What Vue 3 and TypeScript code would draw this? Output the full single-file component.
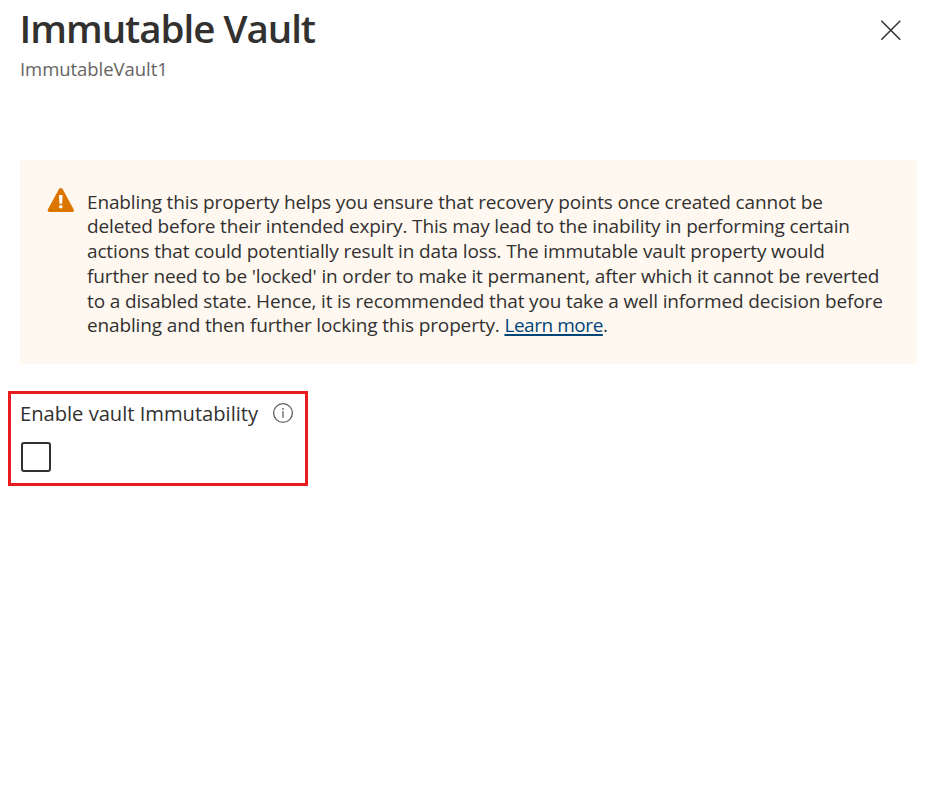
<script setup lang="ts">
import { ref } from 'vue'

const vaultName = 'ImmutableVault1'
const immutable = ref(false)

const lines: string[] = [
  'Enabling this property helps you ensure that recovery points once created cannot be',
  'deleted before their intended expiry. This may lead to the inability in performing certain',
  'actions that could potentially result in data loss. The immutable vault property would',
  "further need to be 'locked' in order to make it permanent, after which it cannot be reverted",
  'to a disabled state. Hence, it is recommended that you take a well informed decision before',
]
</script>

<template>
  <main class="panel">
    <header class="header">
      <div>
        <h1 class="title">Immutable Vault</h1>
        <p class="subtitle">{{ vaultName }}</p>
      </div>
      <button class="close" type="button" aria-label="Close">
        <svg width="22" height="22" viewBox="0 0 22 22" fill="none" stroke="#323130" stroke-width="1.5">
          <path d="M1.3 1.8 20.3 20.8M20.3 1.8 1.3 20.8" />
        </svg>
      </button>
    </header>

    <section class="notice">
      <svg class="warning" width="28" height="26" viewBox="0 0 28 26">
        <path d="M11.7 1.4Q13.8-1.2 15.9 1.4L26.6 21.2Q27.8 24 25 24H2.6Q-.2 24 1 21.2Z" fill="#db7500" />
        <path d="M12 7h3.6l-.4 8.8h-2.8z" fill="#fff" />
        <circle cx="13.8" cy="18.8" r="1.8" fill="#fff" />
      </svg>
      <p class="message">
        <span v-for="line in lines" :key="line" class="line">{{ line }}</span>
        <span class="line">enabling and then further locking this property. <a class="link" href="#">Learn more</a>.</span>
      </p>
    </section>

    <section class="setting">
      <div class="label-row">
        <label class="label" for="immutability">Enable vault Immutability</label>
        <svg class="info" width="22" height="22" viewBox="0 0 22 22">
          <circle cx="11" cy="11" r="9.4" fill="none" stroke="#605e5c" stroke-width="1.3" />
          <path d="M11 9.3v6.4" stroke="#605e5c" stroke-width="1.3" />
          <circle cx="11" cy="6.9" r=".9" fill="#605e5c" />
        </svg>
      </div>
      <input id="immutability" v-model="immutable" class="checkbox" type="checkbox" />
    </section>
  </main>
</template>

<style>
body {
  background: #fff;
}
</style>

<style scoped>
.panel {
  box-sizing: border-box;
  width: 944px;
  height: 792px;
  overflow: hidden;
  font-family: 'Open Sans', 'Noto Sans', sans-serif;
  color: #323130;
}

.header {
  display: flex;
  justify-content: space-between;
  height: 160px;
  padding: 0 42px 0 20px;
  box-sizing: border-box;
}

.title {
  margin: 2px 0 0 -0.5px;
  font-size: 38.5px;
  font-weight: 600;
  line-height: 53px;
  letter-spacing: -1.02px;
}

.subtitle {
  margin: 1px 0 0 0;
  font-size: 18.5px;
  line-height: 26px;
  letter-spacing: -0.05px;
  color: #666462;
}

.close {
  display: flex;
  width: 22px;
  height: 22px;
  margin-top: 19px;
  padding: 0;
  border: 0;
  background: none;
}

.notice {
  display: flex;
  box-sizing: border-box;
  width: 897px;
  height: 204px;
  margin-left: 20px;
  padding: 29px 0 0 27px;
  border-radius: 3px;
  background: #fff8f1;
}

.warning {
  flex: none;
  margin-top: -1px;
}

.message {
  margin: 0.7px 0 0 12px;
  font-size: 19px;
  line-height: 24.7px;
  letter-spacing: -0.142px;
  white-space: nowrap;
}

.line {
  display: block;
}

.link {
  letter-spacing: -0.45px;
  color: #004578;
  text-decoration: underline;
  text-decoration-thickness: 1.5px;
  text-underline-offset: 2px;
  text-decoration-skip-ink: none;
}

.setting {
  box-sizing: border-box;
  width: 300px;
  height: 95px;
  margin: 27px 0 0 8px;
  padding: 6px 0 0 9px;
  border: 3px solid #e81b1e;
}

.label-row {
  display: flex;
  align-items: center;
  height: 27px;
}

.label {
  width: 252px;
  font-size: 20.2px;
  line-height: 27px;
  letter-spacing: -0.03px;
  white-space: nowrap;
}

.info {
  flex: none;
  margin-bottom: 2px;
}

.checkbox {
  display: block;
  box-sizing: border-box;
  width: 30px;
  height: 30px;
  margin: 15px 0 0 1px;
  border: 2px solid #323130;
  border-radius: 3px;
  background: #fff;
  appearance: none;
}
</style>
